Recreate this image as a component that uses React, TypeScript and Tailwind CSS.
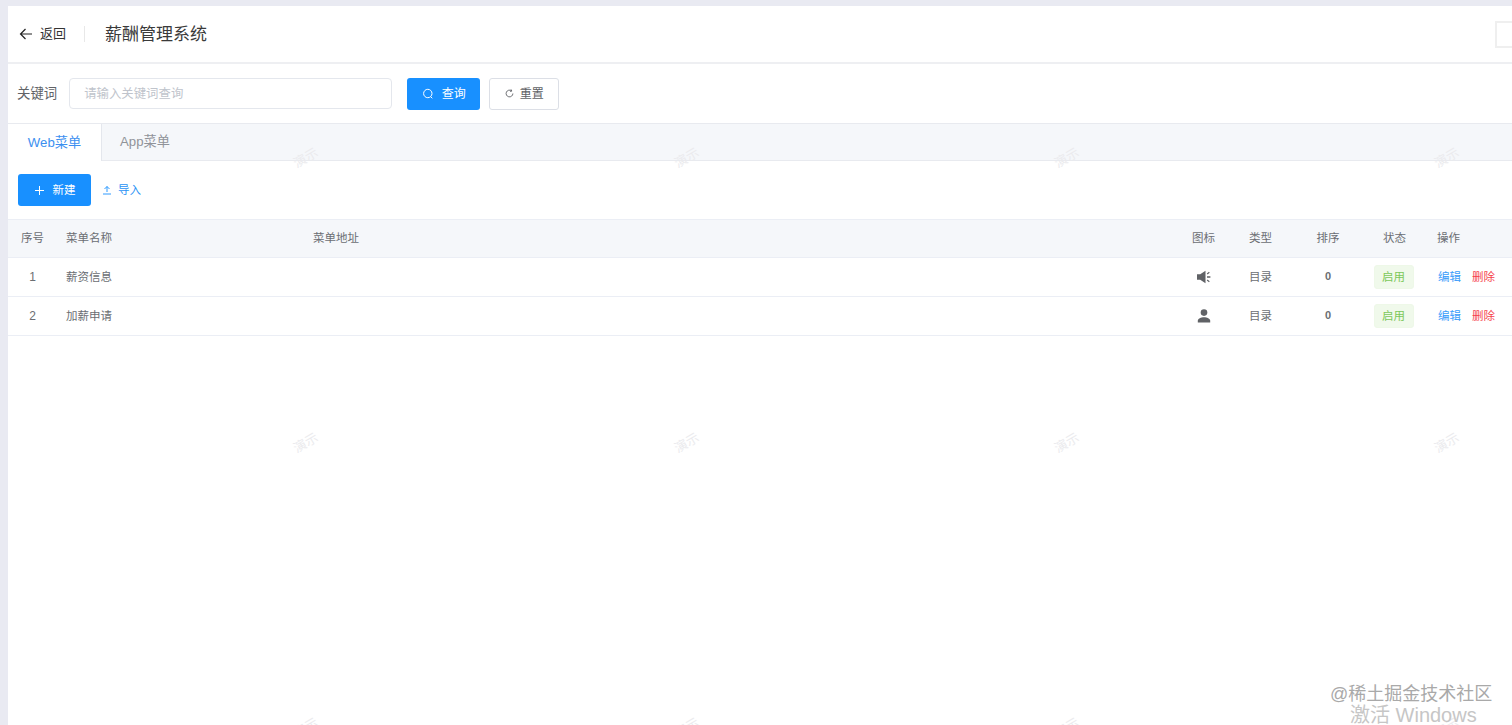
import React from "react";

const font = { fontFamily: '"Liberation Sans", "Noto Sans CJK SC", sans-serif' };

const columns = "grid grid-cols-[49px_247px_868px_60px_54px_80px_54px_1fr]";

function Row({ no, name, icon }: { no: string; name: string; icon: React.ReactNode }) {
  return (
    <div className={`${columns} h-[39px] items-center border-b border-[#ebeef5] text-[11.5px] text-[#6b6e73]`}>
      <div className="text-center text-[12px]">{no}</div>
      <div className="pl-[9px] pt-[2px]">{name}</div>
      <div />
      <div className="flex justify-center pl-[3px]">{icon}</div>
      <div className="pl-[3px] pt-[2px] text-center">目录</div>
      <div className="pb-[2px] pl-[4px] text-center text-[11px] font-bold">0</div>
      <div className="flex justify-center pl-[1px]">
        <span className="flex h-6 w-10 items-center justify-center rounded-[3px] border border-[#eef8e8] bg-[#f0f9eb] pt-[2px] text-[#7cc85a]">启用</span>
      </div>
      <div className="flex gap-[11px] pl-[18px] pt-[2px]">
        <span className="text-[#3b9dfa]">编辑</span>
        <span className="text-[#f5414b]">删除</span>
      </div>
    </div>
  );
}

const Speaker = (
  <svg width="16" height="16" viewBox="0 0 16 16" fill="#606266">
    <path d="M1 5.2h3.2L9.5 1.8v12.4L4.2 10.8H1z" />
    <path d="M11 7.2h3.4v1.6H11zM10.8 4.5l2.2-1.7.7 1-2.2 1.7zM10.8 11.5l2.2 1.7.7-1-2.2-1.7z" />
  </svg>
);

const Person = (
  <svg width="16" height="16" viewBox="0 0 16 16" fill="#606266">
    <circle cx="8" cy="4.6" r="3.3" />
    <path d="M1.8 14.5v-1.7c0-2.4 3.2-3.6 6.2-3.6s6.2 1.2 6.2 3.6v1.7z" />
  </svg>
);

const marks = [158, 443, 728].flatMap((top) =>
  [306, 687, 1067, 1447].map((left) => ({ top, left }))
);

export default function App() {
  return (
    <div style={font} className="relative h-[725px] w-[1512px] overflow-hidden bg-[#e9eaf2] pl-2 pt-[6px]">
      <div className="flex h-full flex-col bg-white">
        <header className="flex h-[58px] shrink-0 items-center border-b-2 border-[#eeeff2] pl-[11px]">
          <svg width="14" height="14" viewBox="0 0 14 14" fill="none" stroke="#222" strokeWidth="1.2">
            <path d="M13 7H1.5M6.5 2 1.5 7l5 5" />
          </svg>
          <span className="ml-[7px] text-[13px] text-[#333]">返回</span>
          <div className="ml-[18px] h-4 w-px bg-[#e8e8e8]" />
          <h1 className="ml-[20px] pt-[2px] text-[17px] leading-6 text-[#3a3a3a]">薪酬管理系统</h1>
          <div className="ml-auto h-[27px] w-[17px] border-y-2 border-l-2 border-[#efefef]" />
        </header>

        <div className="flex h-[59px] shrink-0 items-center pl-[9px]">
          <span className="pt-[2px] text-[13.4px] text-[#606266]">关键词</span>
          <div className="ml-[12px] flex h-[31px] w-[323px] items-center rounded-[4px] border border-[#e4e7ed] pl-[14px] pt-[2px] text-[12.4px] text-[#c0c4cc]">
            请输入关键词查询
          </div>
          <button className="ml-[15px] flex h-[32px] w-[73px] items-center justify-center gap-[8px] rounded-[3px] bg-[#1890ff] text-[12px] text-white">
            <svg width="12" height="12" viewBox="0 0 12 12" fill="none" stroke="white" strokeWidth="1">
              <circle cx="5.8" cy="5.5" r="4.2" />
              <path d="m8.8 8.8 1.5 1.5" />
            </svg>
            查询
          </button>
          <button className="ml-[9px] flex h-[32px] w-[70px] items-center justify-center gap-[6px] rounded-[3px] border border-[#dcdfe6] text-[12px] text-[#606266]">
            <svg width="9" height="9" viewBox="0 0 12 12" fill="none" stroke="#606266" strokeWidth="1.2">
              <path d="M10.5 6A4.5 4.5 0 1 1 8.7 2.4" />
              <path d="M8.2 .6 9 2.8l-2.3.4" />
            </svg>
            重置
          </button>
        </div>

        <div className="flex h-[38px] shrink-0 border-y border-[#e8eaef] bg-[#f5f7fa] text-[13.2px]">
          <div className="-mb-px flex w-[94px] items-center justify-center border-r border-[#e4e7ed] bg-white text-[#3c8ff0]">Web菜单</div>
          <div className="flex w-[86px] items-center justify-center text-[#909399]">App菜单</div>
        </div>

        <div className="flex h-[58px] shrink-0 items-center pl-[10px]">
          <button className="flex h-[32px] w-[73px] items-center justify-center gap-[8px] rounded-[3px] bg-[#1890ff] text-[11.5px] text-white">
            <svg width="11" height="11" viewBox="0 0 11 11" stroke="white" strokeWidth="1">
              <path d="M5.5 1v9M1 5.5h9" />
            </svg>
            <span className="pt-[2px]">新建</span>
          </button>
          <button className="ml-[11px] flex items-center gap-[6px] text-[11.5px] text-[#2a93f5]">
            <svg width="10" height="10" viewBox="0 0 10 10" fill="none" stroke="#1890ff" strokeWidth="0.9">
              <path d="M1 9h8M5 7V1.5M2.5 4 5 1.5 7.5 4" />
            </svg>
            <span className="pt-[2px]">导入</span>
          </button>
        </div>

        <div className={`${columns} h-[39px] shrink-0 items-center border-y border-[#ebeef5] bg-[#f5f7fa] text-[11.5px] text-[#6b6e73]`}>
          <div className="text-center">序号</div>
          <div className="pl-[9px]">菜单名称</div>
          <div className="pl-[9px]">菜单地址</div>
          <div className="pl-[3px] text-center">图标</div>
          <div className="pl-[3px] text-center">类型</div>
          <div className="pl-[4px] text-center">排序</div>
          <div className="pl-[3px] text-center">状态</div>
          <div className="pl-[17px]">操作</div>
        </div>
        <Row no="1" name="薪资信息" icon={Speaker} />
        <Row no="2" name="加薪申请" icon={Person} />
      </div>

      {marks.map((m) => (
        <span
          key={`${m.top}-${m.left}`}
          className="absolute -translate-x-1/2 -translate-y-1/2 -rotate-[30deg] text-[13px] text-[#ebebee]"
          style={{ top: m.top, left: m.left }}
        >
          演示
        </span>
      ))}

      <div className="absolute left-[1330px] top-[682px] text-[18px] leading-[24px] text-[#a9a9a9]">@稀土掘金技术社区</div>
      <div className="absolute left-[1350px] top-[703px] text-[20px] leading-[24px] text-[#c6c6c6]">激活 Windows</div>
    </div>
  );
}
